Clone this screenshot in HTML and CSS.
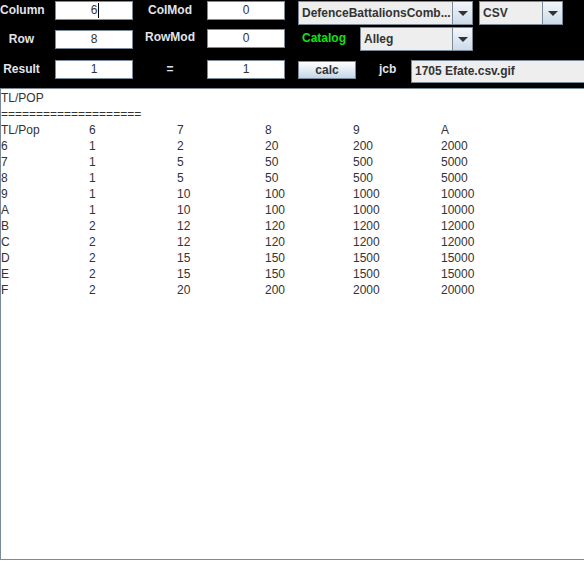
FILE: index.html
```html
<!DOCTYPE html>
<html>
<head>
<meta charset="utf-8">
<link rel="stylesheet" href="styles.css">
</head>
<body>
<div class="panel">
  <div class="row r1">
    <div class="lbl lcol m1">Column</div>
    <div class="tf m1"><span class="val">6<span class="caret"></span></span></div>
    <div class="lbl lmid m1">ColMod</div>
    <div class="tf m1">0</div>
    <div class="combo big m1"><span class="ctext">DefenceBattalionsComb...</span><span class="arrow"><i></i></span></div>
    <div class="combo small m1"><span class="ctext">CSV</span><span class="arrow"><i></i></span></div>
  </div>
  <div class="row r2">
    <div class="lbl lcol m3">Row</div>
    <div class="tf m3">8</div>
    <div class="lbl lmid m1">RowMod</div>
    <div class="tf m2">0</div>
    <div class="lbl green m2">Catalog</div>
    <div class="combo alleg"><span class="ctext">Alleg</span><span class="arrow"><i></i></span></div>
  </div>
  <div class="row r3">
    <div class="lbl lcol m3">Result</div>
    <div class="tf m3">1</div>
    <div class="lbl lmid m3">=</div>
    <div class="tf m3">1</div>
    <div class="btn">calc</div>
    <div class="lbl jcb m3">jcb</div>
    <div class="file">1705 Efate.csv.gif</div>
  </div>
</div>
<div class="area">
  <div class="line">TL/POP</div>
  <div class="line">====================</div>
  <div class="grid">
    <span>TL/Pop</span><span>6</span><span>7</span><span>8</span><span>9</span><span>A</span>
    <span>6</span><span>1</span><span>2</span><span>20</span><span>200</span><span>2000</span>
    <span>7</span><span>1</span><span>5</span><span>50</span><span>500</span><span>5000</span>
    <span>8</span><span>1</span><span>5</span><span>50</span><span>500</span><span>5000</span>
    <span>9</span><span>1</span><span>10</span><span>100</span><span>1000</span><span>10000</span>
    <span>A</span><span>1</span><span>10</span><span>100</span><span>1000</span><span>10000</span>
    <span>B</span><span>2</span><span>12</span><span>120</span><span>1200</span><span>12000</span>
    <span>C</span><span>2</span><span>12</span><span>120</span><span>1200</span><span>12000</span>
    <span>D</span><span>2</span><span>15</span><span>150</span><span>1500</span><span>15000</span>
    <span>E</span><span>2</span><span>15</span><span>150</span><span>1500</span><span>15000</span>
    <span>F</span><span>2</span><span>20</span><span>200</span><span>2000</span><span>20000</span>
  </div>
</div>
</body>
</html>
```
FILE: styles.css
```css
html, body {
  margin: 0;
  padding: 0;
  background: #ffffff;
  overflow: hidden;
  font-family: "Liberation Sans", Arial, sans-serif;
  font-size: 12px;
}
.panel {
  background: #000000;
  height: 88px;
  width: 584px;
  overflow: hidden;
}
.row {
  display: flex;
  align-items: flex-start;
}
.row > * { flex: none; }
.r1 { height: 27px; }
.r2 { height: 30px; }
.r3 { height: 31px; }
.m1 { margin-top: 1px; }
.m2 { margin-top: 2px; }
.m3 { margin-top: 3px; }

.lbl {
  color: #e2e4ea;
  font-weight: bold;
  height: 19px;
  line-height: 19px;
  white-space: nowrap;
}
.lcol {
  width: 43px;
  margin-right: 12px;
  text-align: center;
}
.lmid {
  width: 74px;
  text-align: center;
}
.tf {
  box-sizing: border-box;
  width: 78px;
  height: 19px;
  background: #ffffff;
  border: 1px solid #7a8a99;
  color: #333333;
  text-align: center;
  line-height: 17px;
}
.val { position: relative; }
.caret {
  position: absolute;
  right: -2px;
  top: 0;
  width: 1px;
  height: 15px;
  background: #000000;
}
.combo {
  box-sizing: border-box;
  height: 24px;
  display: flex;
  background: #eeeeee;
  border: 1px solid #7a8a99;
  color: #333333;
  font-weight: bold;
}
.combo.big { width: 175px; margin-left: 13px; }
.combo.small { width: 84px; margin-left: 6px; }
.combo.alleg { width: 113px; margin-left: 12px; }
.ctext {
  flex: 1;
  padding-left: 3px;
  line-height: 22px;
  white-space: nowrap;
  overflow: hidden;
}
.arrow {
  width: 19px;
  border-left: 1px solid #7a8a99;
  background: linear-gradient(#f2f6fa, #ccdbea);
  display: flex;
  align-items: center;
  justify-content: center;
}
.arrow i {
  width: 0;
  height: 0;
  border-left: 5px solid transparent;
  border-right: 5px solid transparent;
  border-top: 5px solid #333333;
}
.green {
  color: #12e012;
  margin-left: 17px;
  width: 46px;
}
.btn {
  box-sizing: border-box;
  margin-left: 13px;
  margin-top: 4px;
  width: 58px;
  height: 18px;
  border: 1px solid #7a8a99;
  background: linear-gradient(#ffffff, #c4d6e8);
  color: #333333;
  font-weight: bold;
  text-align: center;
  line-height: 16px;
}
.jcb {
  margin-left: 23px;
  width: 21px;
  margin-right: 11px;
}
.file {
  box-sizing: border-box;
  margin-top: 3px;
  width: 190px;
  height: 23px;
  background: #eeeeee;
  border: 1px solid #7a8a99;
  color: #333333;
  font-weight: bold;
  padding-left: 3px;
  line-height: 21px;
  white-space: nowrap;
}
.area {
  box-sizing: border-box;
  width: 600px;
  height: 472px;
  border: 1px solid #7a8a99;
  border-right: none;
  padding-top: 1px;
  color: #333333;
  line-height: 16px;
}
.line { height: 16px; white-space: nowrap; }
.grid {
  display: grid;
  grid-template-columns: repeat(6, 88px);
  grid-auto-rows: 16px;
}
```
